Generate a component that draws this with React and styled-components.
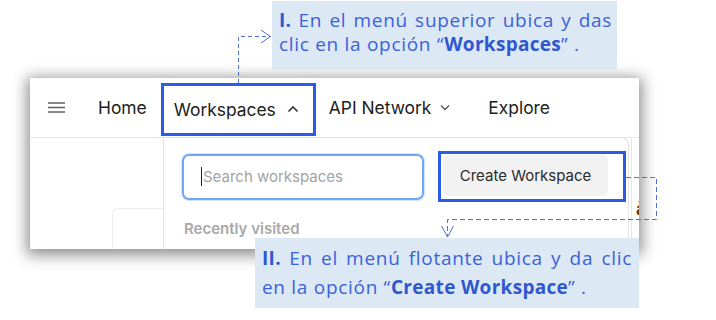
import styled, { createGlobalStyle } from "styled-components";

const Global = createGlobalStyle`
  body {
    margin: 0;
    background: #fff;
  }
`;

const App = () => {
  return (
    <Stage>
      <Global />
      <Panel>
        <NavBar>
          <Burger>
            <svg width="17" height="11" viewBox="0 0 17 11">
              <path d="M0 1h17M0 5.5h17M0 10h17" stroke="#616161" strokeWidth="1.4" />
            </svg>
          </Burger>
          <NavItem gap={33}>Home</NavItem>
          <Highlight>
            Workspaces
            <svg width="12" height="8" viewBox="0 0 12 8">
              <path d="M1.5 6.5L6 2l4.5 4.5" fill="none" stroke="#333" strokeWidth="1.6" />
            </svg>
          </Highlight>
          <NavItem gap={13}>
            API Network
            <svg width="10" height="7" viewBox="0 0 10 7">
              <path d="M1 1.5l4 4 4-4" fill="none" stroke="#555" strokeWidth="1.3" />
            </svg>
          </NavItem>
          <NavItem gap={38}>Explore</NavItem>
        </NavBar>

        <Body>
          <LeftCol>
            <Card />
          </LeftCol>
          <Dropdown>
            <TopRow>
              <Search>
                <Caret />
                Search workspaces
              </Search>
              <ButtonFrame>
                <CreateButton>Create Workspace</CreateButton>
              </ButtonFrame>
            </TopRow>
            <Label>Recently visited</Label>
          </Dropdown>
          <RightStrip>
            <Glyph>à</Glyph>
          </RightStrip>
        </Body>
      </Panel>

      <Arrows width="716" height="320" viewBox="0 0 716 320">
        <g fill="none" stroke="#4b72d6" strokeWidth="1">
          <path d="M238.5 83V36.5H270" strokeDasharray="4 3" />
          <path d="M261 30l9.5 6.5L261 43" />
          <path d="M626 177.5H656.5V219.5H447.5V236" strokeDasharray="5 3" />
          <path d="M441.5 226l6 11 6-11" />
        </g>
      </Arrows>

      <Callout top={1} left={272} width={345} height={69} pad="7px 5px 0 7px" lh={24}>
        <Line justify>
          <b>I.</b> En el menú superior ubica y das
        </Line>
        <Line>
          clic en la opción “<b>Workspaces</b>” .
        </Line>
      </Callout>

      <Callout top={238} left={255} width={384} height={70} pad="6px 7px 0 7px" lh={29}>
        <Line justify>
          <b>II.</b> En el menú flotante ubica y da clic
        </Line>
        <Line>
          en la opción “<b>Create Workspace</b>” .
        </Line>
      </Callout>
    </Stage>
  );
};

const Stage = styled.div`
  position: relative;
  width: 716px;
  height: 320px;
  padding: 78px 0 0 30px;
  box-sizing: border-box;
  background: #fff;
  overflow: hidden;
  font-family: Inter, "Liberation Sans", sans-serif;
`;

const Panel = styled.div`
  width: 609px;
  height: 171px;
  background: #fff;
  display: flex;
  flex-direction: column;
  overflow: hidden;
  box-shadow: 0 3px 14px 3px rgba(0, 0, 0, 0.45);
`;

const NavBar = styled.div`
  height: 60px;
  flex-shrink: 0;
  display: flex;
  align-items: center;
  border-bottom: 1px solid #e6e6e6;
  box-sizing: border-box;
  padding-left: 18px;
  color: #212121;
  font-size: 17.4px;
`;

const Burger = styled.div`
  display: flex;
  width: 17px;
`;

const NavItem = styled.div`
  display: flex;
  align-items: center;
  gap: 9px;
  margin-left: ${({ gap }) => gap}px;
  white-space: nowrap;
`;

const Highlight = styled.div`
  display: flex;
  align-items: center;
  gap: 11px;
  margin: 3px 0 0 14px;
  height: 53px;
  padding: 0 14px 0 10px;
  box-sizing: border-box;
  border: 3px solid #2b5ce6;
  white-space: nowrap;
`;

const Body = styled.div`
  flex: 1;
  display: flex;
  margin-top: -1px;
`;

const LeftCol = styled.div`
  width: 133px;
  flex-shrink: 0;
  padding: 71px 0 0 82px;
  box-sizing: border-box;
  display: flex;
`;

const Card = styled.div`
  flex: 1;
  border: 1px solid #ececec;
  border-right: none;
  border-bottom: none;
  border-radius: 6px 0 0 0;
`;

const Dropdown = styled.div`
  width: 466px;
  flex-shrink: 0;
  background: #fff;
  border: 1px solid #e3e3e3;
  border-bottom: none;
  border-top-right-radius: 8px;
  padding: 13px 0 0 18px;
  box-sizing: border-box;
`;

const TopRow = styled.div`
  display: flex;
  align-items: center;
`;

const Search = styled.div`
  width: 242px;
  height: 46px;
  box-sizing: border-box;
  border: 2px solid #6ea7f6;
  border-radius: 7px;
  box-shadow: 0 0 0 1px #d2e4fd;
  display: flex;
  align-items: center;
  padding-left: 17px;
  color: #a3a3a3;
  font-size: 15px;
`;

const Caret = styled.span`
  width: 1px;
  height: 19px;
  background: #222;
  margin-right: 1px;
`;

const ButtonFrame = styled.div`
  margin-left: 14px;
  border: 3px solid #2b5ce6;
  padding: 1px 15px 3px 2px;
`;

const CreateButton = styled.button`
  width: 165px;
  height: 41px;
  border: none;
  border-radius: 6px;
  background: #f2f2f2;
  color: #2b2b2b;
  font-family: Inter, "Liberation Sans", sans-serif;
  font-size: 15px;
  padding: 0;
`;

const Label = styled.div`
  margin: 17px 0 0 2px;
  font-size: 15px;
  font-weight: 600;
  color: #a9a9a9;
`;

const RightStrip = styled.div`
  flex: 1;
  margin-left: 2px;
  border-left: 1px solid #e6e6e6;
  padding-top: 62px;
  overflow: hidden;
`;

const Glyph = styled.span`
  display: block;
  margin-left: 4px;
  font-size: 17px;
  font-weight: 700;
  color: #6b3b05;
`;

const Arrows = styled.svg`
  position: absolute;
  left: 0;
  top: 0;
  pointer-events: none;
`;

const Callout = styled.div`
  position: absolute;
  top: ${({ top }) => top}px;
  left: ${({ left }) => left}px;
  width: ${({ width }) => width}px;
  height: ${({ height }) => height}px;
  padding: ${({ pad }) => pad};
  box-sizing: border-box;
  background: #dde8f5;
  color: #3a62d9;
  font-family: "Open Sans", "Noto Sans", sans-serif;
  font-size: 19px;
  letter-spacing: 0.7px;
  line-height: ${({ lh }) => lh}px;

  b {
    font-weight: 700;
    letter-spacing: 0.3px;
    color: #2f57d2;
  }
`;

const Line = styled.div`
  white-space: nowrap;
  text-align: ${({ justify }) => (justify ? "justify" : "left")};
  text-align-last: ${({ justify }) => (justify ? "justify" : "auto")};
`;

export default App;
